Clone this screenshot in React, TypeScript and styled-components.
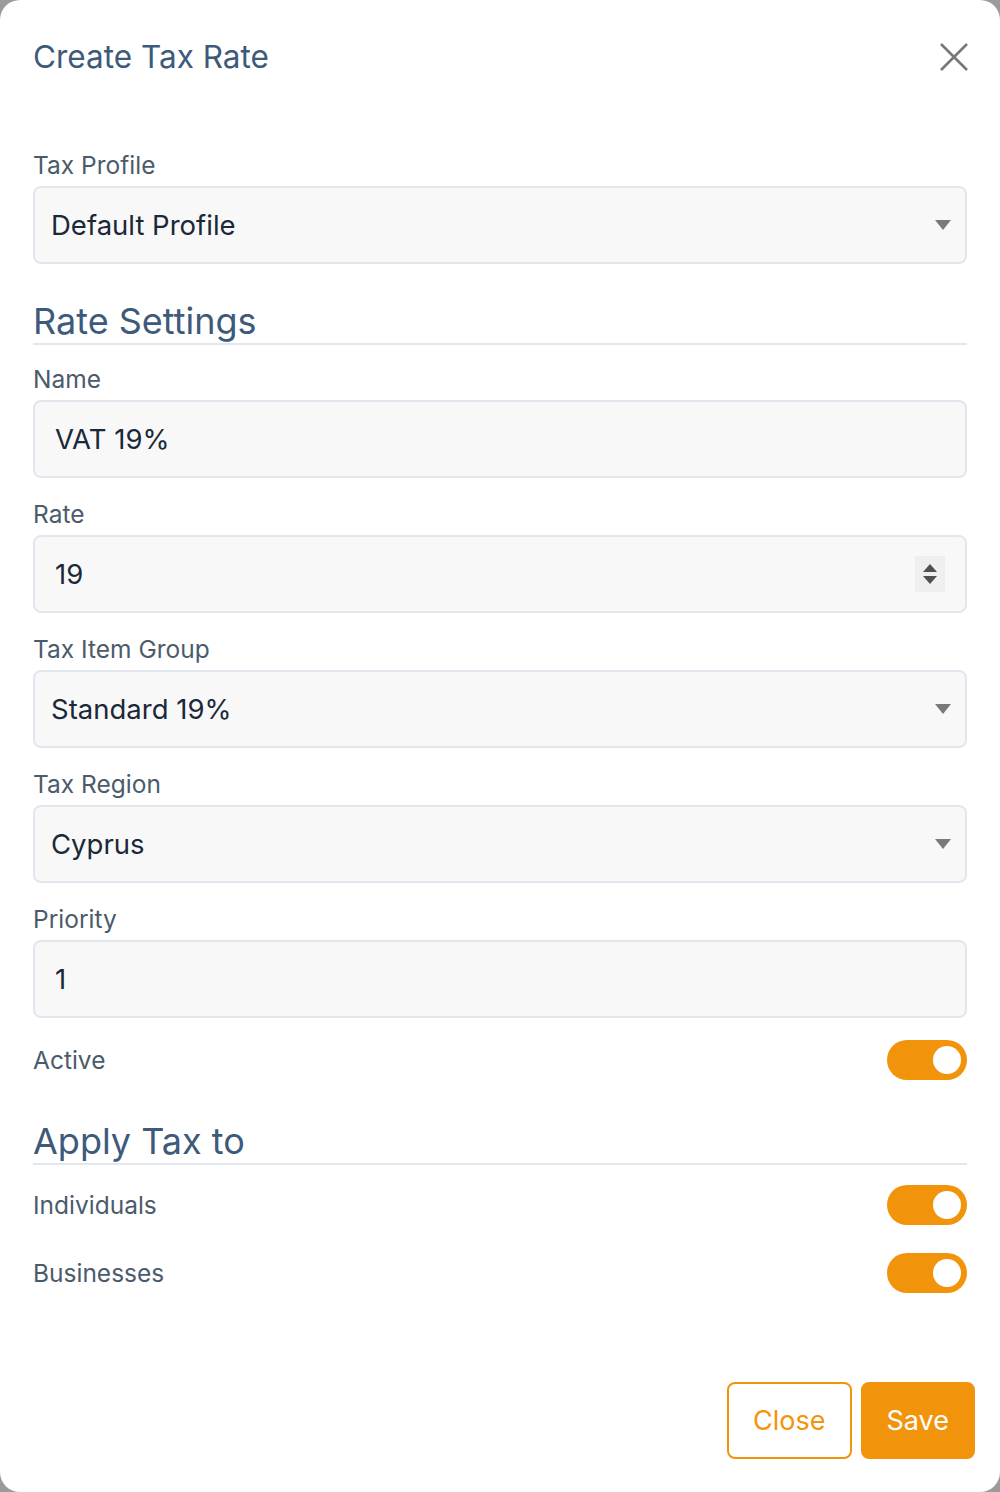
import React from "react";
import styled, { createGlobalStyle } from "styled-components";

const GlobalStyle = createGlobalStyle`
  html, body {
    margin: 0;
    padding: 0;
    background: #9b9b9b;
  }
  body {
    font-family: "Inter", "Lato", sans-serif;
  }
  * {
    box-sizing: border-box;
  }
`;

const ORANGE = "#f2940b";

const Modal = styled.div`
  width: 1000px;
  min-height: 1492px;
  background: #ffffff;
  border-radius: 20px;
  display: flex;
  flex-direction: column;
`;

const Header = styled.div`
  display: flex;
  align-items: center;
  justify-content: space-between;
  padding: 37px 30px 0 33px;
  h1 {
    margin: 0;
    font-size: 31.5px;
    line-height: 40px;
    font-weight: 400;
    color: #3e5a7b;
  }
`;

const CloseIcon = styled.button`
  display: flex;
  align-items: center;
  justify-content: center;
  width: 32px;
  height: 32px;
  padding: 0;
  border: none;
  background: none;
  cursor: pointer;
`;

const Body = styled.div`
  padding: 74px 33px 0 33px;
`;

const Field = styled.div`
  margin-bottom: 22px;
`;

const Label = styled.label`
  display: block;
  font-size: 24.5px;
  line-height: 28px;
  color: #4b5b6c;
  margin-bottom: 7px;
`;

const Shell = styled.div<{ $select?: boolean }>`
  display: flex;
  align-items: center;
  height: 78px;
  padding: 0 ${(p) => (p.$select ? "14px" : "20px")} 0
    ${(p) => (p.$select ? "16px" : "20px")};
  background: #f8f8f9;
  border: 2px solid #e2e6ef;
  border-radius: 8px;
  input {
    flex: 1;
    min-width: 0;
    border: none;
    outline: none;
    background: transparent;
    font-family: inherit;
    font-size: 27.5px;
    color: #1b2838;
    padding: 0;
  }
`;

const SectionTitle = styled.h2<{ $top: number }>`
  margin: ${(p) => p.$top}px 0 20px 0;
  font-size: 36px;
  line-height: 44px;
  font-weight: 400;
  color: #3e5a7b;
  border-bottom: 2px solid #e2e6ef;
`;

const Spinner = styled.div`
  width: 30px;
  height: 36px;
  background: #efefef;
  display: flex;
  flex-direction: column;
  align-items: center;
  justify-content: center;
  gap: 4px;
`;

const SwitchRow = styled.div<{ $gap?: number }>`
  display: flex;
  align-items: center;
  justify-content: space-between;
  margin-bottom: ${(p) => p.$gap ?? 28}px;
  span.text {
    font-size: 24.5px;
    color: #4b5b6c;
  }
`;

const Switch = styled.span<{ $on: boolean }>`
  position: relative;
  display: inline-block;
  width: 80px;
  height: 40px;
  border-radius: 20px;
  background: ${(p) => (p.$on ? ORANGE : "#d6d9e0")};
  &::after {
    content: "";
    position: absolute;
    top: 6px;
    left: ${(p) => (p.$on ? "46px" : "6px")};
    width: 28px;
    height: 28px;
    border-radius: 50%;
    background: #ffffff;
  }
`;

const Footer = styled.div`
  margin-top: auto;
  display: flex;
  justify-content: flex-end;
  gap: 9px;
  padding: 0 25px 33px 0;
`;

const Button = styled.button<{ $primary?: boolean }>`
  height: 77px;
  padding: 0 24px;
  border-radius: 8px;
  font-family: inherit;
  font-size: 27px;
  cursor: pointer;
  border: 2px solid ${ORANGE};
  background: ${(p) => (p.$primary ? ORANGE : "#ffffff")};
  color: ${(p) => (p.$primary ? "#ffffff" : ORANGE)};
`;

const Caret = () => (
  <svg width="16" height="10" viewBox="0 0 16 10">
    <path d="M0 0 L16 0 L8 10 Z" fill="#7a7a7a" />
  </svg>
);

const SelectField = ({ label, value }: { label: string; value: string }) => (
  <Field>
    <Label>{label}</Label>
    <Shell $select>
      <input readOnly value={value} />
      <Caret />
    </Shell>
  </Field>
);

const InputField = ({
  label,
  value,
  spinner,
}: {
  label: string;
  value: string;
  spinner?: boolean;
}) => (
  <Field>
    <Label>{label}</Label>
    <Shell>
      <input readOnly value={value} />
      {spinner && (
        <Spinner>
          <svg width="14" height="8" viewBox="0 0 14 8">
            <path d="M7 0 L14 8 L0 8 Z" fill="#505050" />
          </svg>
          <svg width="14" height="8" viewBox="0 0 14 8">
            <path d="M0 0 L14 0 L7 8 Z" fill="#505050" />
          </svg>
        </Spinner>
      )}
    </Shell>
  </Field>
);

export default function App() {
  return (
    <>
      <GlobalStyle />
      <Modal>
        <Header>
          <h1>Create Tax Rate</h1>
          <CloseIcon aria-label="Close">
            <svg width="30" height="30" viewBox="0 0 30 30">
              <path
                d="M2 2 L28 28 M28 2 L2 28"
                stroke="#777777"
                strokeWidth="2.6"
                fill="none"
              />
            </svg>
          </CloseIcon>
        </Header>
        <Body>
          <SelectField label="Tax Profile" value="Default Profile" />
          <SectionTitle $top={35}>Rate Settings</SectionTitle>
          <InputField label="Name" value="VAT 19%" />
          <InputField label="Rate" value="19" spinner />
          <SelectField label="Tax Item Group" value="Standard 19%" />
          <SelectField label="Tax Region" value="Cyprus" />
          <InputField label="Priority" value="1" />
          <SwitchRow $gap={0}>
            <span className="text">Active</span>
            <Switch $on />
          </SwitchRow>
          <SectionTitle $top={39}>Apply Tax to</SectionTitle>
          <SwitchRow>
            <span className="text">Individuals</span>
            <Switch $on />
          </SwitchRow>
          <SwitchRow>
            <span className="text">Businesses</span>
            <Switch $on />
          </SwitchRow>
        </Body>
        <Footer>
          <Button>Close</Button>
          <Button $primary>Save</Button>
        </Footer>
      </Modal>
    </>
  );
}
